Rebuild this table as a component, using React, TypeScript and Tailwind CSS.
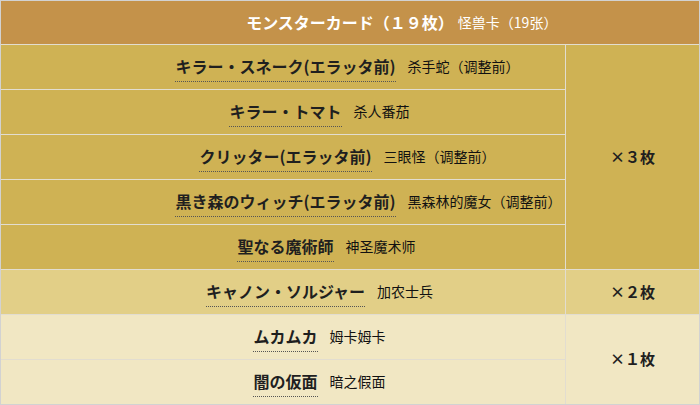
import React from 'react';

interface Card {
  ja: string;
  zh: string;
}

const groups: { cards: Card[]; count: string; bg: string }[] = [
  {
    cards: [
      { ja: 'キラー・スネーク(エラッタ前)', zh: '杀手蛇（调整前）' },
      { ja: 'キラー・トマト', zh: '杀人番茄' },
      { ja: 'クリッター(エラッタ前)', zh: '三眼怪（调整前）' },
      { ja: '黒き森のウィッチ(エラッタ前)', zh: '黑森林的魔女（调整前）' },
      { ja: '聖なる魔術師', zh: '神圣魔术师' },
    ],
    count: '×３枚',
    bg: 'bg-[#cfb254]',
  },
  {
    cards: [{ ja: 'キャノン・ソルジャー', zh: '加农士兵' }],
    count: '×２枚',
    bg: 'bg-[#e2cf87]',
  },
  {
    cards: [
      { ja: 'ムカムカ', zh: '姆卡姆卡' },
      { ja: '闇の仮面', zh: '暗之假面' },
    ],
    count: '×１枚',
    bg: 'bg-[#f1e7c3]',
  },
];

const jaFont = "font-['Noto_Sans_CJK_JP','Noto_Sans',sans-serif]";
const zhFont = "font-['Noto_Sans_CJK_SC',sans-serif]";

const CardRow = ({ card, last }: { card: Card; last: boolean }) => (
  <div
    className={`flex items-center justify-center pl-[5px] ${
      last ? 'h-[44px]' : 'h-[45px] border-b border-[#e2ddd0]'
    }`}
  >
    <div className="relative">
      <span
        className={`${jaFont} text-[16px] font-bold text-[#1f1f1f] leading-[20px] border-b border-dotted border-[#555] pb-[3px]`}
      >
        {card.ja}
      </span>
      <span
        className={`${zhFont} absolute left-full top-[1px] ml-[12px] whitespace-nowrap text-[14px] text-[#111] leading-[20px]`}
      >
        {card.zh}
      </span>
    </div>
  </div>
);

export default function App() {
  return (
    <div className="w-[700px] h-[405px] bg-white">
      <div className="w-[700px] border border-[#d2d2d2]">
        {/* header */}
        <div className="h-[44px] bg-[#c4924a] border-b border-[#e2ddd0] flex items-center justify-center">
          <div className="relative">
            <span className={`${jaFont} text-[16px] font-bold text-white leading-[20px]`}>
              モンスターカード（１９枚）
            </span>
            <span
              className={`${zhFont} absolute left-full top-[1px] ml-[4px] whitespace-nowrap text-[14px] text-white leading-[20px]`}
            >
              怪兽卡（19张）
            </span>
          </div>
        </div>

        {groups.map((g, gi) => (
          <div
            key={gi}
            className={`flex ${g.bg} ${gi < groups.length - 1 ? 'border-b border-[#e2ddd0]' : ''}`}
          >
            <div className="w-[565px] border-r border-[#e2ddd0]">
              {g.cards.map((c, i) => (
                <CardRow key={c.ja} card={c} last={i === g.cards.length - 1} />
              ))}
            </div>
            <div className="flex-1 flex items-center justify-center">
              <span className={`${jaFont} text-[15px] font-bold text-[#1f1f1f]`}>{g.count}</span>
            </div>
          </div>
        ))}
      </div>
    </div>
  );
}
